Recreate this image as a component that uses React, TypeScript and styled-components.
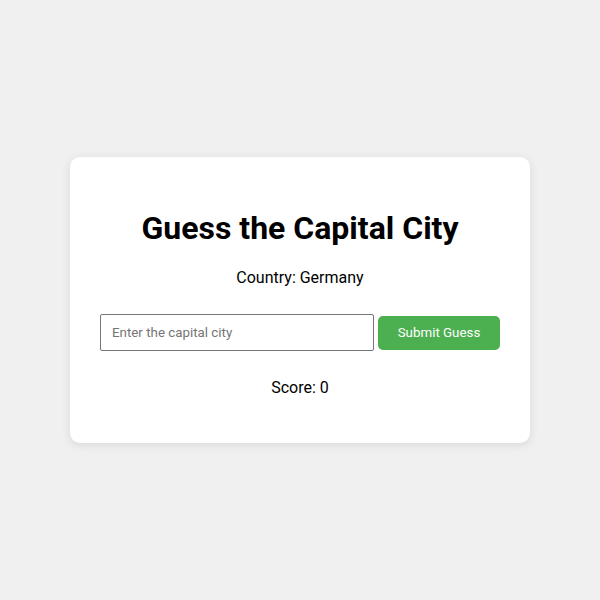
import React, { useState } from "react";
import styled, { createGlobalStyle } from "styled-components";

const GlobalStyle = createGlobalStyle`
  html, body {
    margin: 0;
    padding: 0;
    background: #f0f0f0;
    font-family: Roboto, "Liberation Sans", Arial, sans-serif;
  }
  #root {
    min-height: 100vh;
  }
`;

const Page = styled.div`
  min-height: 100vh;
  display: flex;
  align-items: center;
  justify-content: center;
`;

const Card = styled.div`
  width: 460px;
  box-sizing: border-box;
  padding: 30px;
  background: #fff;
  border-radius: 10px;
  box-shadow: 0 2px 10px rgba(0, 0, 0, 0.1);
  display: flex;
  flex-direction: column;
  align-items: stretch;
  text-align: center;
`;

const Title = styled.h1`
  margin: 23px 0 21px;
  font-size: 32px;
  font-weight: 700;
  line-height: 37.5px;
  color: #000;
`;

const Text = styled.p<{ $top?: number; $bottom?: number }>`
  margin: ${(p) => p.$top ?? 0}px 0 ${(p) => p.$bottom ?? 0}px;
  font-size: 16px;
  line-height: 19px;
  color: #000;
`;

const Row = styled.div`
  display: flex;
  align-items: center;
  gap: 4px;
  margin: 27px 0 27px;
`;

const Input = styled.input`
  width: 274px;
  height: 37px;
  box-sizing: border-box;
  padding: 10px 11px;
  font-family: Roboto, "Liberation Sans", Arial, sans-serif;
  font-size: 13.333px;
  border: 1px solid #767676;
  border-radius: 2px;
  color: #000;
  outline: none;
  &::placeholder {
    color: #757575;
  }
`;

const Button = styled.button`
  width: 122px;
  height: 34px;
  box-sizing: border-box;
  border: none;
  border-radius: 5px;
  background: #4caf50;
  color: #fff;
  font-family: Roboto, "Liberation Sans", Arial, sans-serif;
  font-size: 13.333px;
  cursor: pointer;
`;

export default function App() {
  const [guess, setGuess] = useState("");
  const [score] = useState(0);
  return (
    <>
      <GlobalStyle />
      <Page>
        <Card>
          <Title>Guess the Capital City</Title>
          <Text>Country: Germany</Text>
          <Row>
            <Input
              placeholder="Enter the capital city"
              value={guess}
              onChange={(e) => setGuess(e.target.value)}
            />
            <Button>Submit Guess</Button>
          </Row>
          <Text $bottom={16}>Score: {score}</Text>
        </Card>
      </Page>
    </>
  );
}
